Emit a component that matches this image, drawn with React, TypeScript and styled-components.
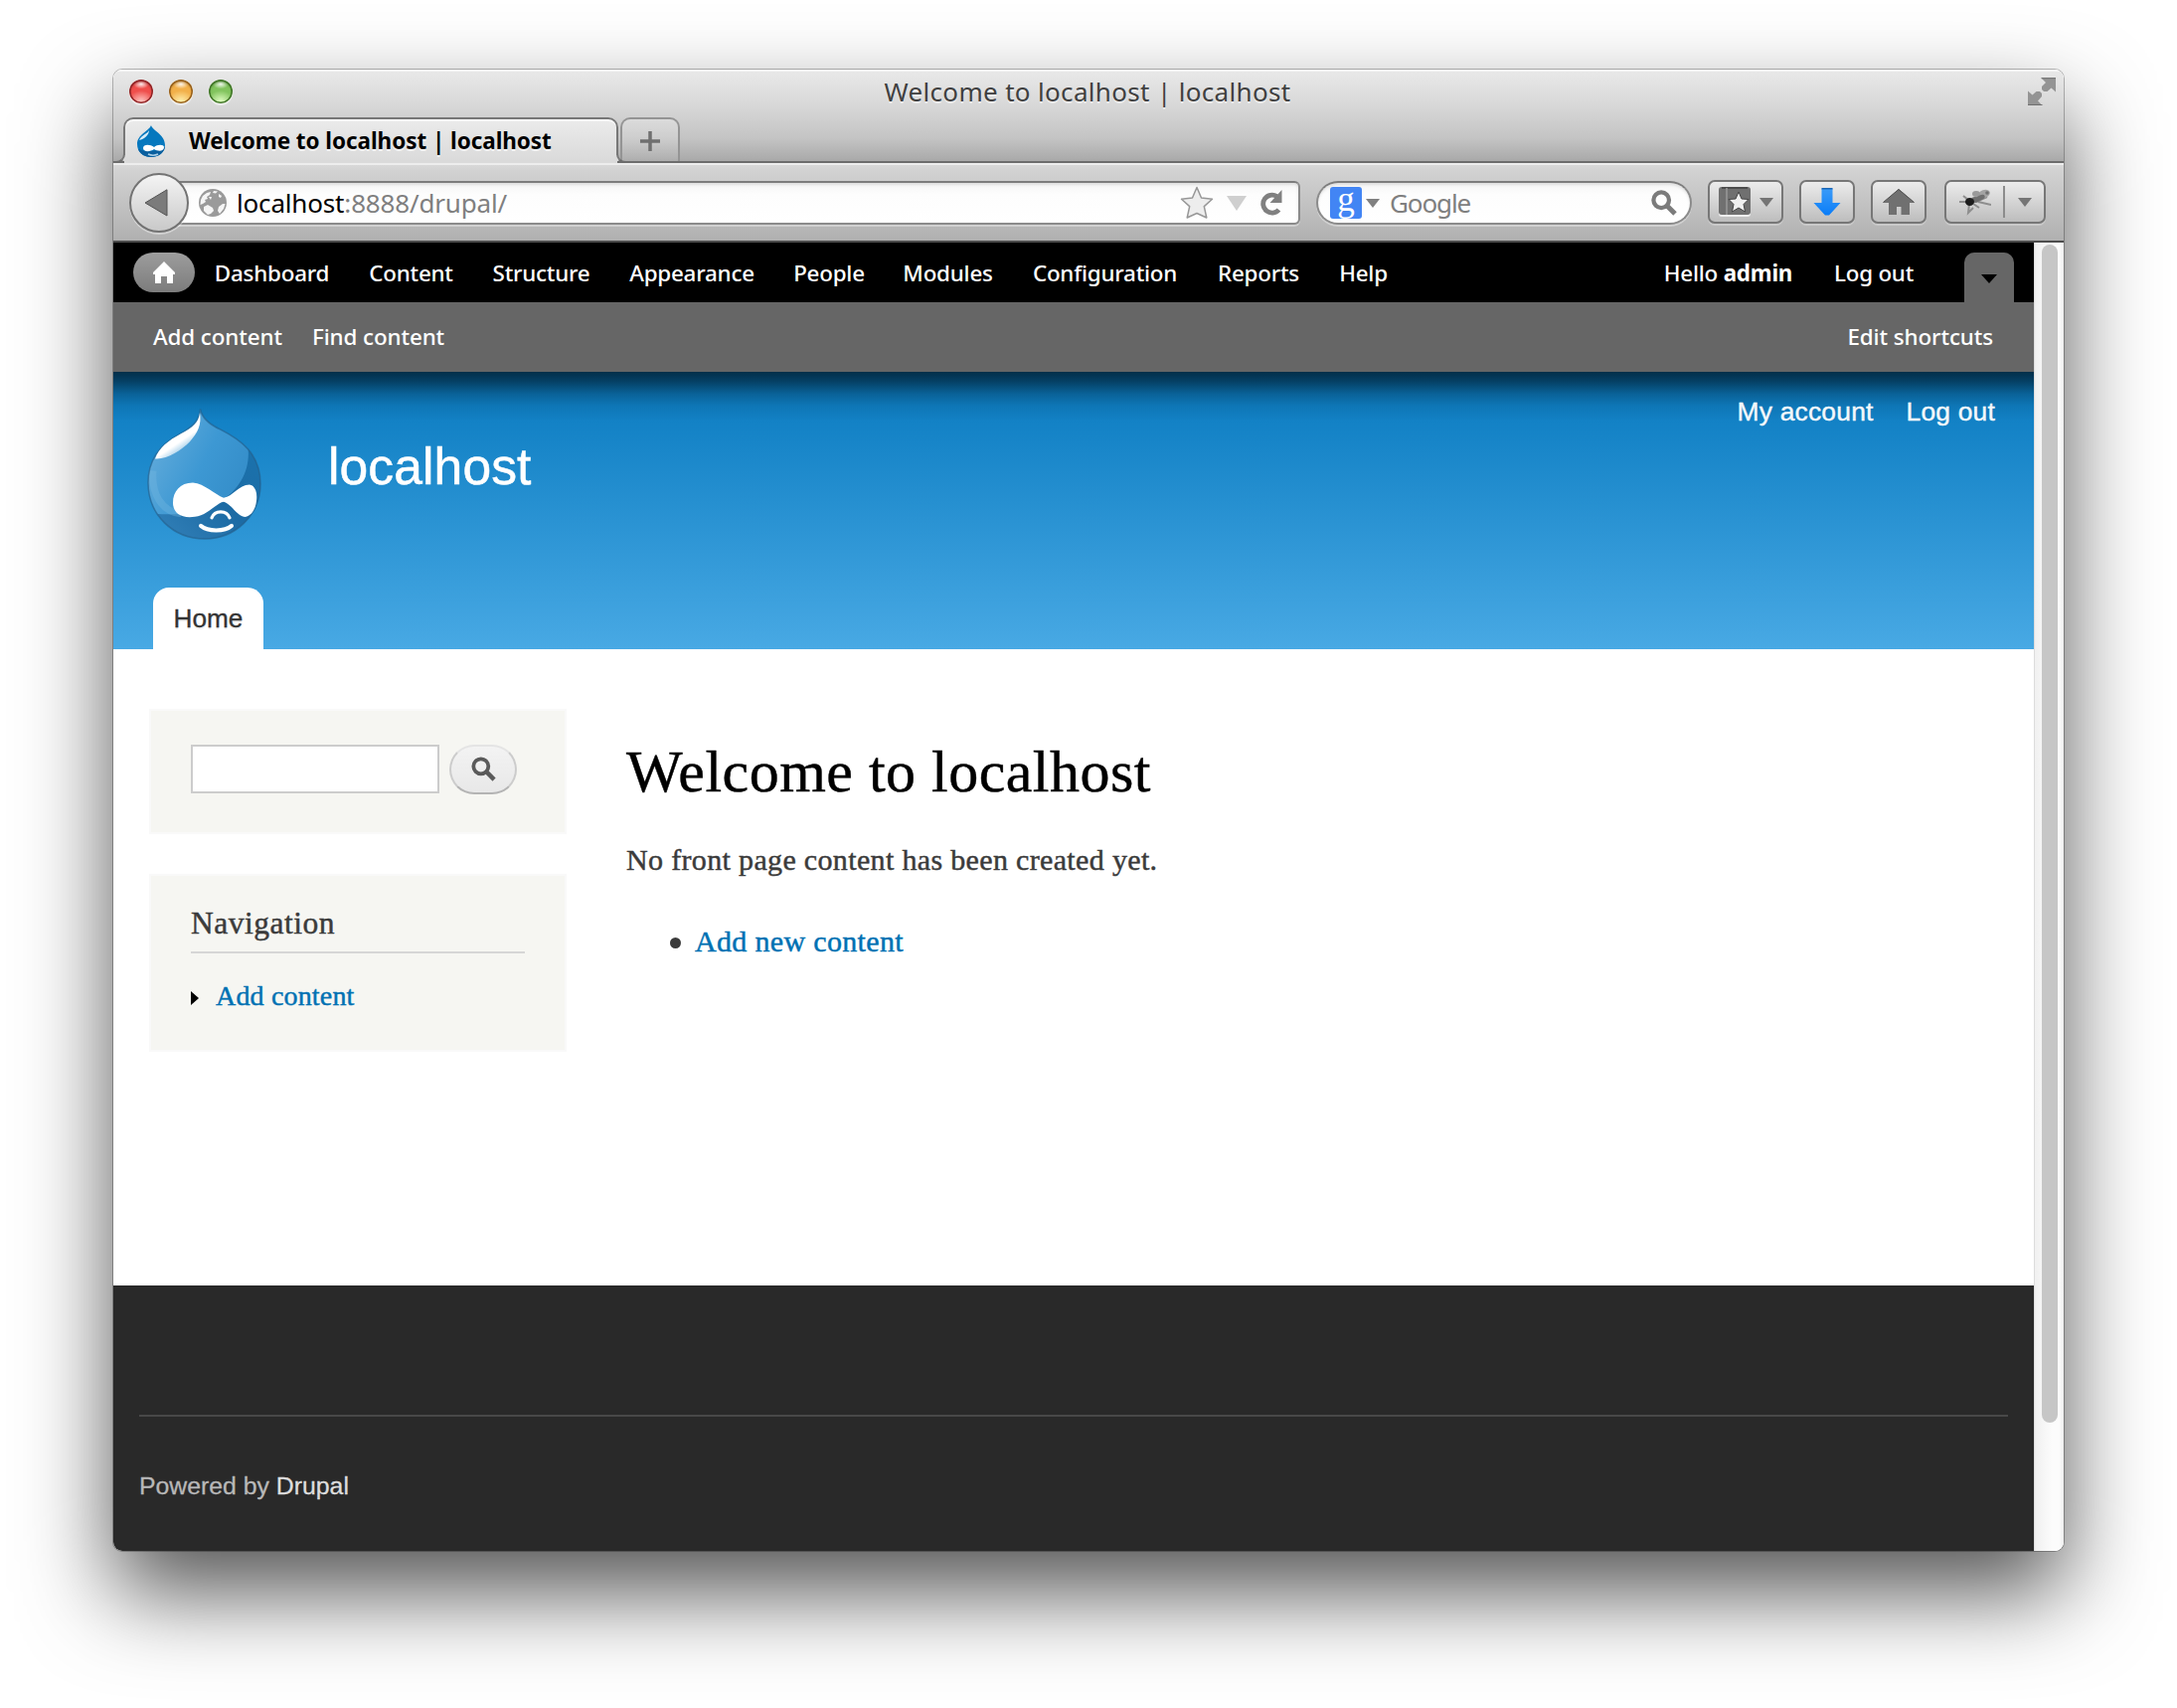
import React from "react";
import styled, { createGlobalStyle } from "styled-components";

const chromeFont = `"Noto Sans", "Open Sans", sans-serif`;
const sansFont = `"Liberation Sans", Arial, sans-serif`;
const serifFont = `"Liberation Serif", "Times New Roman", serif`;

const GlobalStyle = createGlobalStyle`
  * { box-sizing: border-box; }
  body { margin: 0; background: #fff; }
  svg { display: block; flex: none; }
  a { text-decoration: none; color: inherit; }
`;

const Desktop = styled.div`
  width: 2190px;
  height: 1718px;
  padding: 70px 114px 0;
  background: #fff;
  overflow: hidden;
`;

const Shadow = styled.div`
  width: 1962px;
  height: 1490px;
  border-radius: 9px;
  box-shadow: 0 0 0 1px rgba(0, 0, 0, 0.26), 0 42px 90px rgba(0, 0, 0, 0.67);
`;

const Window = styled.div`
  display: flex;
  flex-direction: column;
  height: 100%;
  border-radius: 9px;
  overflow: hidden;
  background: #fff;
`;

/* ---------- browser chrome ---------- */

const TitleArea = styled.div`
  flex: none;
  height: 94px;
  border-bottom: 2px solid #6d6d6d;
  background: linear-gradient(#e9e9e9, #dadada 35%, #c4c4c4 75%, #a9a9a9);
  box-shadow: inset 0 2px 0 #f6f6f6;
`;

const TitleRow = styled.div`
  display: grid;
  grid-template-columns: 200px 1fr 200px;
  align-items: center;
  height: 48px;
  padding: 0 8px 4px 16px;
`;

const Lights = styled.div`
  display: flex;
  gap: 16px;
`;

const Light = styled.span<{ $dark: string; $mid: string; $glow: string }>`
  width: 24px;
  height: 24px;
  border-radius: 50%;
  background:
    radial-gradient(ellipse 8px 5px at 50% 18%, rgba(255, 255, 255, 0.95), rgba(255, 255, 255, 0) 100%),
    radial-gradient(ellipse 13px 11px at 50% 92%, ${(p) => p.$glow}, rgba(255, 255, 255, 0) 100%),
    ${(p) => p.$mid};
  box-shadow: inset 0 0 0 1.5px ${(p) => p.$dark}, inset 0 2px 3px ${(p) => p.$dark}, 0 2px 1px rgba(255, 255, 255, 0.55);
`;

const WindowTitle = styled.div`
  text-align: center;
  font: 26px/1 ${chromeFont};
  letter-spacing: 0.33px;
  color: #404040;
  text-shadow: 0 2px 0 rgba(255, 255, 255, 0.5);
  padding-right: 10px;
`;

const ExpandSlot = styled.div`
  display: flex;
  justify-content: flex-end;
`;

const TabStrip = styled.div`
  display: flex;
  align-items: flex-end;
  gap: 2px;
  height: 44px;
  padding-left: 10px;
`;

const Tab = styled.div`
  position: relative;
  display: flex;
  align-items: center;
  gap: 23px;
  width: 498px;
  height: 44px;
  padding: 3px 14px 0;
  background: linear-gradient(#ececec, #dadada);
  border-radius: 10px 10px 0 0;
  font: bold 22.5px/1 ${chromeFont};
  color: #000;
  &::before {
    content: "";
    position: absolute;
    inset: 0 0 6px 0;
    border: 2px solid #777;
    border-bottom: 0;
    border-radius: 10px 10px 0 0;
    box-shadow: inset 0 2px 0 #f8f8f8;
  }
`;

const TabFoot = styled.span<{ $side: "left" | "right" }>`
  position: absolute;
  bottom: -2px;
  ${(p) => p.$side}: -10px;
  width: 12px;
  height: 10px;
  border-bottom: 2px solid #6d6d6d;
  ${(p) =>
    p.$side === "left"
      ? "border-right: 2px solid #777; border-bottom-right-radius: 9px;"
      : "border-left: 2px solid #777; border-bottom-left-radius: 9px;"}
`;

const TabBase = styled.span`
  position: absolute;
  left: 1px;
  right: 1px;
  bottom: -2px;
  height: 3px;
  background: #dadada;
`;

const TabLabel = styled.span`
  position: relative;
  padding-top: 2px;
  letter-spacing: -0.06px;
  white-space: nowrap;
  text-shadow: 0 2px 0 rgba(255, 255, 255, 0.6);
`;

const NewTab = styled.div`
  display: flex;
  align-items: center;
  justify-content: center;
  width: 60px;
  height: 44px;
  padding-top: 2px;
  border: 2px solid #949494;
  border-bottom: 0;
  border-radius: 10px 10px 0 0;
  background: linear-gradient(rgba(255, 255, 255, 0.25), rgba(255, 255, 255, 0.05));
`;

const Toolbar = styled.div`
  flex: none;
  display: flex;
  align-items: center;
  height: 80px;
  padding: 2px 18px 0 16px;
  border-bottom: 2px solid #4d4d4d;
  background: linear-gradient(#dadada, #d2d2d2 10%, #b0b0b0);
  box-shadow: inset 0 2px 0 #ededed;
`;

const BackButton = styled.div`
  position: relative;
  z-index: 1;
  display: flex;
  align-items: center;
  width: 60px;
  height: 60px;
  padding-left: 13px;
  margin-right: -14px;
  border: 2px solid #737373;
  border-radius: 50%;
  background: linear-gradient(#f4f4f4, #c9c9c9);
  box-shadow: 0 2px 0 rgba(255, 255, 255, 0.4);
`;

const Field = styled.div<{ $w: number; $radius: string; $pad: string; $ml?: number }>`
  display: flex;
  align-items: center;
  width: ${(p) => p.$w}px;
  height: 44px;
  margin-left: ${(p) => p.$ml ?? 0}px;
  padding: ${(p) => p.$pad};
  border: 2px solid #8b8b8b;
  border-top-color: #7c7c7c;
  border-radius: ${(p) => p.$radius};
  background: linear-gradient(#f6f6f6, #fdfdfd 30%, #fff);
  box-shadow: inset 0 2px 3px rgba(0, 0, 0, 0.1), 0 2px 0 rgba(255, 255, 255, 0.35);
  font: 26px/1 ${chromeFont};
  color: #7f7f7f;
  white-space: nowrap;
`;

const UrlText = styled.span`
  flex: 1;
  margin-left: 10px;
  letter-spacing: -0.17px;
  b { font-weight: 400; color: #000; }
`;

const UrlIcons = styled.div`
  display: flex;
  align-items: center;
  gap: 13px;
`;

const EngineBadge = styled.span`
  display: flex;
  justify-content: center;
  width: 32px;
  height: 32px;
  border-radius: 3px;
  background: #4285f4;
  color: #fff;
  font: 35px/25px ${serifFont};
`;

const CaretGap = styled.span`
  margin-left: 4px;
`;

const SearchHint = styled.span`
  flex: 1;
  margin-left: 10px;
  letter-spacing: -1.1px;
`;

const ButtonRow = styled.div`
  display: flex;
  gap: 16px;
  margin: -2px 0 0 16px;
`;

const ToolButton = styled.div<{ $w: number; $ml?: number }>`
  display: flex;
  align-items: center;
  justify-content: center;
  gap: 9px;
  width: ${(p) => p.$w}px;
  height: 44px;
  margin-left: ${(p) => p.$ml ?? 0}px;
  border: 2px solid #777;
  border-radius: 7px;
  background: linear-gradient(#ececec, #bdbdbd);
  box-shadow: 0 2px 0 rgba(255, 255, 255, 0.25);
`;

const ButtonDivider = styled.span`
  width: 2px;
  height: 32px;
  margin: 0 4px 0 3px;
  background: #8c8c8c;
`;

/* ---------- page ---------- */

const Viewport = styled.div`
  flex: 1;
  display: flex;
  min-height: 0;
`;

const Page = styled.div`
  display: flex;
  flex-direction: column;
  width: 1932px;
`;

const ScrollTrack = styled.div`
  width: 30px;
  padding: 2px 6px 0 7px;
  border-left: 1px solid #dcdcdc;
  background: linear-gradient(90deg, #f0f0f0, #fcfcfc 60%, #fcfcfc 85%, #ececec);
`;

const ScrollThumb = styled.div`
  width: 16px;
  height: 1185px;
  border-radius: 8px;
  background: #c6c6c6;
`;

const AdminToolbar = styled.div`
  flex: none;
  font: 500 22.4px/1 ${chromeFont};
  letter-spacing: -0.22px;
  color: #fff;
`;

const AdminMenu = styled.div`
  display: flex;
  align-items: center;
  height: 60px;
  padding: 0 20px;
  background: #000;
`;

const HomePill = styled.span`
  display: flex;
  align-items: center;
  justify-content: center;
  width: 62px;
  height: 40px;
  border-radius: 20px;
  background: linear-gradient(#9d9d9d, #7c7c7c);
`;

const MenuItem = styled.a<{ $w: number }>`
  width: ${(p) => p.$w}px;
  padding-top: 2px;
  text-align: center;
  white-space: nowrap;
`;

const MenuSpacer = styled.span`
  flex: 1;
`;

const DrawerToggle = styled.span`
  display: flex;
  align-items: center;
  justify-content: center;
  align-self: flex-end;
  width: 50px;
  height: 50px;
  padding-top: 3px;
  margin-left: 30px;
  border-radius: 10px 10px 0 0;
  background: #666;
`;

const Shortcuts = styled.div`
  display: flex;
  align-items: center;
  gap: 30px;
  height: 70px;
  padding: 0 41px 0 40px;
  background: #666;
  letter-spacing: -0.1px;
`;

const Header = styled.header`
  flex: none;
  display: flex;
  flex-direction: column;
  height: 279px;
  background:
    linear-gradient(
      rgba(0, 0, 0, 0.62),
      rgba(0, 0, 0, 0.47) 10px,
      rgba(0, 0, 0, 0.22) 22px,
      rgba(0, 0, 0, 0.07) 34px,
      rgba(0, 0, 0, 0) 50px
    ),
    linear-gradient(#0779bf, #48a9e4);
`;

const Branding = styled.div`
  display: flex;
  align-items: flex-start;
  height: 217px;
  padding: 0 39px 0 34px;
  font-family: ${sansFont};
  color: #fff;
`;

const LogoBox = styled.div`
  padding-top: 37px;
`;

const SiteName = styled.div`
  flex: 1;
  margin-left: 66px;
  padding-top: 65px;
  font-size: 51.6px;
  line-height: 60px;
  letter-spacing: 0.1px;
  -webkit-text-stroke: 0.5px;
`;

const UserLinks = styled.nav`
  display: flex;
  gap: 33px;
  padding-top: 24px;
  font-size: 26.4px;
  line-height: 32px;
  letter-spacing: 0.2px;
  -webkit-text-stroke: 0.4px;
  color: #f4f8fb;
`;

const HomeTab = styled.a`
  display: flex;
  align-items: center;
  justify-content: center;
  width: 111px;
  height: 62px;
  margin-left: 40px;
  border-radius: 16px 16px 0 0;
  background: #fff;
  color: #333;
  font: 26.2px/1 ${sansFont};
  text-shadow: 0 2px 0 #eee;
  -webkit-text-stroke: 0.3px;
`;

const Body = styled.div`
  flex: 1;
  display: flex;
  gap: 60px;
  padding: 60px 36px 0;
  font-family: ${serifFont};
  -webkit-text-stroke: 0.45px;
  color: #3b3b3b;
`;

const Sidebar = styled.aside`
  display: flex;
  flex-direction: column;
  gap: 40px;
  width: 420px;
`;

const Block = styled.section<{ $h: number; $top: number }>`
  height: ${(p) => p.$h}px;
  padding: ${(p) => p.$top}px 40px 0;
  border: 2px solid #f9f9f9;
  background: #f6f6f2;
`;

const SearchForm = styled.div`
  display: flex;
  gap: 10px;
`;

const SearchInput = styled.div`
  width: 250px;
  height: 49px;
  border: 2px solid #ccc;
  background: #fff;
`;

const SearchButton = styled.div`
  display: flex;
  align-items: center;
  justify-content: center;
  width: 68px;
  height: 50px;
  padding-bottom: 2px;
  border: 2px solid #ccc;
  border-top-color: #e4e4e4;
  border-bottom-color: #b4b4b4;
  border-radius: 25px;
  background: linear-gradient(#f3f3f3, #e8e8e8);
`;

const BlockTitle = styled.h2`
  margin: 0;
  height: 46px;
  border-bottom: 2px solid #d6d6d6;
  font-size: 31.5px;
  font-weight: 400;
  line-height: 32px;
  letter-spacing: 0.5px;
`;

const TreeLink = styled.a`
  display: flex;
  align-items: center;
  gap: 17px;
  margin-top: 27px;
  font-size: 28px;
  line-height: 32px;
  letter-spacing: 0.17px;
  color: #0071b3;
  svg { margin-top: 3px; }
`;

const Main = styled.main`
  padding-top: 31px;
`;

const PageTitle = styled.h1`
  margin: 0;
  font-size: 60px;
  font-weight: 400;
  line-height: 64px;
  letter-spacing: 0.48px;
  color: #000;
`;

const Copy = styled.p`
  margin: 37px 0 0;
  font-size: 30px;
  line-height: 40px;
  letter-spacing: 0.34px;
`;

const BulletItem = styled.div`
  display: flex;
  align-items: center;
  gap: 14px;
  margin-top: 42px;
  padding-left: 44px;
  font-size: 30px;
  line-height: 40px;
  letter-spacing: 0.33px;
  a { color: #0071b3; }
`;

const Bullet = styled.span`
  width: 11px;
  height: 11px;
  margin-top: 2px;
  border-radius: 50%;
  background: #3b3b3b;
`;

const Footer = styled.footer`
  flex: none;
  height: 267px;
  padding: 130px 26px 0;
  background: #292929;
`;

const FooterNote = styled.div`
  padding-top: 54px;
  border-top: 2px solid #484848;
  font: 24.8px/32px ${sansFont};
  -webkit-text-stroke: 0.3px;
  color: #b8b8b8;
  a { color: #dedede; }
`;

/* ---------- drawings ---------- */

const Caret = ({ w, h, fill = "#757575" }: { w: number; h: number; fill?: string }) => (
  <svg width={w} height={h} viewBox="0 0 10 6" preserveAspectRatio="none">
    <path d="M0 0H10L5 6Z" fill={fill} />
  </svg>
);

const Magnifier = ({ size, color, stroke = 5 }: { size: number; color: string; stroke?: number }) => (
  <svg width={size} height={size} viewBox="0 0 26 26" fill="none" stroke={color} strokeWidth={stroke}>
    <circle cx="10.2" cy="10.2" r="7.8" strokeWidth={stroke * 0.85} />
    <path d="M16 16L24 24" />
  </svg>
);

const dropOutline =
  "M53.5 0.500C55 9 63 16 74 21C94 31 114 45 114 75C114 107 88 130 58 130C26 130 1 106 1 74C1 52 13 36 32 26C44 19 53 13 53.500 0.500Z";

const DrupalLogo = () => (
  <svg width="116" height="133" viewBox="0 0 116 132" preserveAspectRatio="none">
    <defs>
      <linearGradient id="drop" x1="0" y1="0.2" x2="1" y2="0.8">
        <stop offset="0" stopColor="#66addb" />
        <stop offset="0.45" stopColor="#3d98d3" />
        <stop offset="1" stopColor="#2f87c3" />
      </linearGradient>
      <linearGradient id="shade" x1="0" y1="1" x2="1" y2="0">
        <stop offset="0" stopColor="#3482ba" />
        <stop offset="0.5" stopColor="#1d6ba4" />
        <stop offset="1" stopColor="#1a73ae" />
      </linearGradient>
      <linearGradient id="gloss" x1="0.4" y1="0.4" x2="0.7" y2="0.85">
        <stop offset="0.5" stopColor="#fff" />
        <stop offset="1" stopColor="#fff" stopOpacity="0.3" />
      </linearGradient>
      <clipPath id="dropClip">
        <path d={dropOutline} />
      </clipPath>
    </defs>
    <g clipPath="url(#dropClip)">
      <rect width="116" height="132" fill="url(#drop)" />
      <path d="M101 35C105 58 95 80 74 92C54 104 34 107 8 105L20 132H116V40Z" fill="url(#shade)" />
      <path d="M6 62C4 84 14 103 34 105" fill="none" stroke="#79b9e2" strokeWidth="7" opacity="0.35" />
    </g>
    <path d={dropOutline} fill="none" stroke="#245f8c" strokeOpacity="0.65" strokeWidth="1.500" />
    <path d="M53 4C52 14 46 19 34 25C21 32 12 39 8 50C20 51 34 42 43 33C51 24 55 16 53 4Z" fill="url(#gloss)" />
    <path
      d="M46 74C58 75 68 86 77 89C86 88 92 76 103 76C109 77 111 84 110 92C109 102 103 109 97 108C90 106 84 95 77 93C70 94 60 107 48 108C34 110 26 104 26 94C26 83 33 74 46 74Z"
      fill="#fff"
    />
    <path d="M65 109C68 101 80 101 83 109" fill="none" stroke="#fff" strokeWidth="3.200" strokeLinecap="round" />
    <path d="M54 117C61 123 78 123 85 117" fill="none" stroke="#fff" strokeWidth="4" strokeLinecap="round" />
  </svg>
);

const Favicon = () => (
  <svg width="29" height="32" viewBox="0 0 29 32">
    <path d="M14 0C15 5 28 9 28 20C28 27 22 32 14 32C6 32 0 27 0 19C0 9 12 6 14 0Z" fill="#0678be" />
    <path d="M1 24C8 27 20 27 28 22C27 28 21 32 14 32C8 32 3 29 1 24Z" fill="#0b5f9e" />
    <path d="M12 5C11 8 4 10 2 15C7 14 12 10 12 5Z" fill="#d8ecf8" />
    <path d="M6 23C6 19 13 19 17 22C20 19 27 19 27 22C27 27 20 26 17 24C13 27 6 27 6 23Z" fill="#fff" />
    <path d="M11 29C14 30.500 18 30.500 21 29" stroke="#a8cde6" strokeWidth="1.600" fill="none" />
  </svg>
);

const Globe = () => (
  <svg width="28" height="28" viewBox="0 0 28 28">
    <circle cx="14" cy="14" r="14" fill="#9a9a9a" />
    <path d="M4 7L8 4L12 3L11 6L8 8L9 10L6 11L7 13L4 15L1.500 16L2 11Z" fill="#f5f5f5" />
    <path d="M5 18L9 16L14 19L15 22L12 25L9 26L5 22Z" fill="#f5f5f5" />
    <path d="M20 18L24 15L26.500 15L25 20L21 25L19 22Z" fill="#f5f5f5" />
    <path d="M15 2L19 2.500L17 4.500L14 4Z M20 5L23 7L22 9L20 8Z M10 8L13 8L12 11Z" fill="#f5f5f5" />
  </svg>
);

const Star = () => (
  <svg width="34" height="34" viewBox="0 0 34 34">
    <path d="M17 1.500L21.500 12L32.500 13.200L24.300 20.600L26.800 32L17 27.500L7.200 32L9.700 20.600L1.500 13.200L12.500 12Z" fill="#ededed" stroke="#979797" strokeWidth="1.500" strokeLinejoin="round" />
  </svg>
);

const Reload = () => (
  <svg width="24" height="26" viewBox="0 0 24 26">
    <path d="M17.500 6.500A9 9 0 1 0 19.500 20" fill="none" stroke="#808080" strokeWidth="4.800" />
    <path d="M22.500 0V13H10.500Z" fill="#808080" />
  </svg>
);

const House = () => (
  <svg width="32" height="26" viewBox="0 0 32 26">
    <path d="M16 0L32 14H27V26H18.500V18H14V26H6V14H0Z" fill="#707070" />
    <path d="M0.500 13.500L16 0.500L31.500 13.500" fill="none" stroke="#505050" />
  </svg>
);

const MenuHouse = () => (
  <svg width="22" height="22" viewBox="0 0 22 22">
    <path d="M11 0L22 11V13H20V22H14V15H8V22H2V13H0V11Z" fill="#fff" />
  </svg>
);

const BookmarkIcon = () => (
  <svg width="32" height="30" viewBox="0 0 32 30">
    <rect y="1" width="32" height="29" rx="3" fill="#eee" />
    <rect width="32" height="28" rx="3" fill="#707070" />
    <path d="M3 1H29" stroke="#4c4c4c" strokeWidth="2" />
    <path d="M8 1V28" stroke="#999" strokeWidth="1.500" />
    <path d="M20 5L23 12L30 12.500L25 17.500L26.500 25L20 21L13.500 25L15 17.500L10 12.500L17 12Z" fill="#f0f0f0" stroke="#454545" strokeWidth="1" />
  </svg>
);

const DownloadArrow = () => (
  <svg width="28" height="28" viewBox="0 0 28 28">
    <defs>
      <linearGradient id="dl" x1="0" y1="0" x2="0" y2="1">
        <stop offset="0" stopColor="#3b9bf8" />
        <stop offset="1" stopColor="#0a7df8" />
      </linearGradient>
    </defs>
    <path d="M8.500 0.700H19.500V15H27.500L16 27.500H12L0.500 15H8.500Z" fill="url(#dl)" />
    <path d="M8.500 0.700H19.500" stroke="#1b66b5" strokeWidth="1.400" />
  </svg>
);

const BlurredBug = styled.svg`
  filter: blur(0.7px);
`;

const Bug = () => (
  <BlurredBug width="32" height="28" viewBox="0 0 32 28">
    <path d="M0 14H8M4 8L9 12M10 16L9 25L14 20M14 16L20 20M19 14L32 17M19 13L28 9" stroke="#8e8e8e" strokeWidth="2" fill="none" />
    <ellipse cx="25" cy="6" rx="6" ry="4" fill="#a3a3a3" transform="rotate(-20 25 6)" />
    <ellipse cx="17" cy="6" rx="4" ry="3" fill="#999" />
    <ellipse cx="21" cy="10" rx="5" ry="2.500" fill="#6e6e6e" transform="rotate(-25 21 10)" />
    <ellipse cx="16" cy="12" rx="4" ry="3" fill="#6e6e6e" />
    <ellipse cx="10.500" cy="14" rx="4.500" ry="4" fill="#1c1c1c" />
    <circle cx="28" cy="5" r="1.800" fill="#707070" />
  </BlurredBug>
);

const ExpandIcon = () => (
  <svg width="28" height="28" viewBox="0 0 28 28" fill="#949494">
    <path d="M13.500 0.500H28V14.500L23.500 10.500L19.500 14L16 14L14 12V9L18 5Z" />
    <path d="M0 13.500L4.500 17.500L8.500 14H12L14 16V19L10 23.500L14.500 28H0Z" />
    <path d="M13.500 0.700H28M0 27.600H14.500" stroke="#6c6c6c" strokeWidth="1" />
  </svg>
);

const menu: [string, number][] = [
  ["Dashboard", 155],
  ["Content", 125],
  ["Structure", 137],
  ["Appearance", 166],
  ["People", 110],
  ["Modules", 129],
  ["Configuration", 187],
  ["Reports", 122],
  ["Help", 89],
];

export default function App() {
  return (
    <Desktop>
      <GlobalStyle />
      <Shadow>
        <Window>
          <TitleArea>
            <TitleRow>
              <Lights>
                <Light $dark="#8f2426" $mid="#ef4f4c" $glow="#ffc9c4" />
                <Light $dark="#96601c" $mid="#f2b04a" $glow="#fff2b0" />
                <Light $dark="#3f7426" $mid="#82c45e" $glow="#e2ffc4" />
              </Lights>
              <WindowTitle>Welcome to localhost | localhost</WindowTitle>
              <ExpandSlot>
                <ExpandIcon />
              </ExpandSlot>
            </TitleRow>
            <TabStrip>
              <Tab>
                <Favicon />
                <TabLabel>Welcome to localhost | localhost</TabLabel>
                <TabBase />
                <TabFoot $side="left" />
                <TabFoot $side="right" />
              </Tab>
              <NewTab>
                <svg width="20" height="20" viewBox="0 0 20 20">
                  <path d="M10 0V20M0 10H20" stroke="#707070" strokeWidth="3.500" />
                </svg>
              </NewTab>
            </TabStrip>
          </TitleArea>

          <Toolbar>
            <BackButton>
              <svg width="24" height="28" viewBox="0 0 24 28">
                <path d="M23 0.800V27L1 14Z" fill="#7b7b7b" stroke="#555" strokeWidth="1" />
              </svg>
            </BackButton>
            <Field $w={1132} $radius="0 6px 6px 0" $pad="0 15px 0 22px">
              <Globe />
              <UrlText>
                <b>localhost</b>:8888/drupal/
              </UrlText>
              <UrlIcons>
                <Star />
                <Caret w={20} h={15} fill="#cfcfcf" />
                <Reload />
              </UrlIcons>
            </Field>
            <Field $w={378} $radius="22px" $pad="0 13px 0 12px" $ml={16}>
              <EngineBadge>g</EngineBadge>
              <CaretGap>
                <Caret w={14} h={9} fill="#808080" />
              </CaretGap>
              <SearchHint>Google</SearchHint>
              <Magnifier size={26} color="#7b7b7b" />
            </Field>
            <ButtonRow>
              <ToolButton $w={76}>
                <BookmarkIcon />
                <Caret w={14} h={9} />
              </ToolButton>
              <ToolButton $w={56}>
                <DownloadArrow />
              </ToolButton>
              <ToolButton $w={56}>
                <House />
              </ToolButton>
              <ToolButton $w={102} $ml={2}>
                <Bug />
                <ButtonDivider />
                <Caret w={14} h={9} />
              </ToolButton>
            </ButtonRow>
          </Toolbar>

          <Viewport>
            <Page>
              <AdminToolbar>
                <AdminMenu>
                  <HomePill>
                    <MenuHouse />
                  </HomePill>
                  {menu.map(([label, w]) => (
                    <MenuItem key={label} $w={w}>
                      {label}
                    </MenuItem>
                  ))}
                  <MenuSpacer />
                  <MenuItem $w={171}>
                    Hello <b>admin</b>
                  </MenuItem>
                  <MenuItem $w={122}>Log out</MenuItem>
                  <DrawerToggle>
                    <Caret w={16} h={9} fill="#000" />
                  </DrawerToggle>
                </AdminMenu>
                <Shortcuts>
                  <a>Add content</a>
                  <a>Find content</a>
                  <MenuSpacer />
                  <a>Edit shortcuts</a>
                </Shortcuts>
              </AdminToolbar>

              <Header>
                <Branding>
                  <LogoBox>
                    <DrupalLogo />
                  </LogoBox>
                  <SiteName>localhost</SiteName>
                  <UserLinks>
                    <a>My account</a>
                    <a>Log out</a>
                  </UserLinks>
                </Branding>
                <HomeTab>Home</HomeTab>
              </Header>

              <Body>
                <Sidebar>
                  <Block $h={126} $top={34}>
                    <SearchForm>
                      <SearchInput />
                      <SearchButton>
                        <Magnifier size={25} color="#5a5a5a" stroke={4.6} />
                      </SearchButton>
                    </SearchForm>
                  </Block>
                  <Block $h={179} $top={32}>
                    <BlockTitle>Navigation</BlockTitle>
                    <TreeLink>
                      <svg width="8" height="14" viewBox="0 0 8 14">
                        <path d="M0 0L8 7L0 14Z" fill="#000" />
                      </svg>
                      Add content
                    </TreeLink>
                  </Block>
                </Sidebar>
                <Main>
                  <PageTitle>Welcome to localhost</PageTitle>
                  <Copy>No front page content has been created yet.</Copy>
                  <BulletItem>
                    <Bullet />
                    <a>Add new content</a>
                  </BulletItem>
                </Main>
              </Body>

              <Footer>
                <FooterNote>
                  Powered by <a>Drupal</a>
                </FooterNote>
              </Footer>
            </Page>
            <ScrollTrack>
              <ScrollThumb />
            </ScrollTrack>
          </Viewport>
        </Window>
      </Shadow>
    </Desktop>
  );
}
